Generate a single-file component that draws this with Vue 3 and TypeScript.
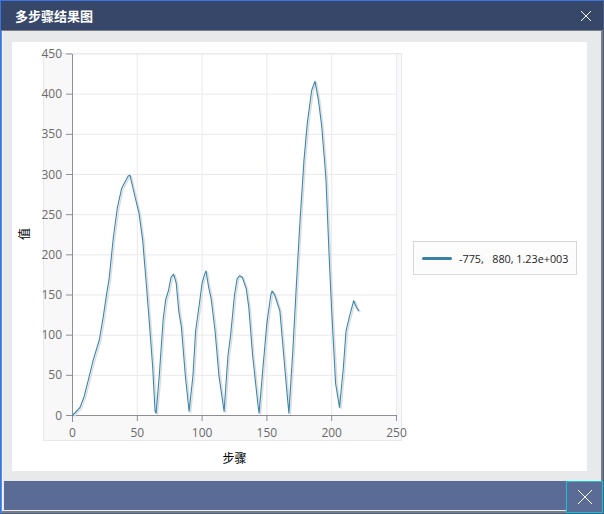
<template>
  <div class="window">
    <header class="titlebar">
      <span class="title">多步骤结果图</span>
      <svg class="close-icon" width="12" height="12" viewBox="0 0 12 12">
        <path d="M1 1L11 11M11 1L1 11" stroke="#fff" stroke-width="1" fill="none" />
      </svg>
    </header>

    <div class="lower">
      <main class="content">
        <div class="panel">
          <svg class="chart" width="392" height="429" viewBox="12 42 392 429">
            <rect x="43.5" y="53.5" width="358" height="387" class="chart-bg" />
            <rect x="72" y="54" width="325" height="362" fill="#fff" />

            <line v-for="t in xTicks" :key="'gx' + t" :x1="xPos(t)" :x2="xPos(t)" y1="54" y2="415.5" class="grid" />
            <line v-for="t in yTicks" :key="'gy' + t" x1="72" x2="397" :y1="yPos(t)" :y2="yPos(t)" class="grid" />

            <line x1="72.5" x2="72.5" y1="54" y2="422" class="axis" />
            <line x1="66" x2="397" y1="415.5" y2="415.5" class="axis" />
            <line v-for="t in xTicks" :key="'tx' + t" :x1="xPos(t)" :x2="xPos(t)" y1="415.5" y2="421" class="axis" />
            <line v-for="t in yTicks" :key="'ty' + t" x1="66" x2="72" :y1="yPos(t)" :y2="yPos(t)" class="axis" />

            <text v-for="t in yTicks" :key="'ly' + t" x="62" :y="yPos(t) + 4" text-anchor="end" class="tick">{{ t }}</text>
            <text v-for="t in xTicks" :key="'lx' + t" :x="xPos(t)" y="437" text-anchor="middle" class="tick">{{ t }}</text>

            <polyline :points="shadowPoints" class="series-shadow" />
            <polyline :points="seriesPoints" class="series" />

            <text x="234.5" y="463" text-anchor="middle" class="axis-title">步骤</text>
            <text x="0" y="0" text-anchor="middle" class="axis-title" transform="translate(29 234) rotate(-90)">值</text>
          </svg>

          <div class="legend">
            <span class="legend-line"></span>
            <span class="legend-label">-775,&nbsp;&nbsp; 880, 1.23e+003</span>
          </div>
        </div>
      </main>

      <footer class="footer">
        <div class="footer-main">
          <div class="footer-bar"></div>
        </div>
        <button class="footer-close" type="button">
          <svg width="16" height="16" viewBox="0 0 16 16">
            <path d="M1 1L15 15M15 1L1 15" stroke="#fff" stroke-width="1" fill="none" />
          </svg>
        </button>
      </footer>
    </div>
  </div>
</template>

<script setup lang="ts">
import { computed } from 'vue'

const xTicks = [0, 50, 100, 150, 200, 250]
const yTicks = [0, 50, 100, 150, 200, 250, 300, 350, 400, 450]

const data: [number, number][] = [
  [0, 0], [5.8, 10], [8.9, 23], [12.2, 44], [16, 69], [20.7, 94], [23.8, 123], [26.4, 152], [28.2, 169],
  [31.5, 221], [34.6, 258], [38, 283], [43, 298], [44.4, 299], [47.5, 277], [51.3, 252], [54.2, 218],
  [57.3, 156], [59.3, 115], [61.9, 60], [63.7, 5], [64.5, 3], [67, 50],
  [70, 120], [72, 145], [74, 155], [76, 172], [78, 176], [80, 165], [82, 130], [84, 110], [87, 50], [90, 5],
  [93, 50], [95, 105], [98, 140], [100, 165], [102, 176], [103, 180], [105, 160], [107, 145], [110, 105],
  [113, 50], [117, 5], [120, 75], [122, 100], [125, 150], [127, 170], [129, 174], [131, 172], [134, 158],
  [136, 135], [139, 75], [143, 15], [144, 3], [147, 60], [150, 115], [153, 150], [154, 155], [156, 150],
  [160, 130], [163, 75], [166, 20], [167, 3], [170, 80], [173, 170], [175.5, 240], [177.6, 293], [178.6, 318],
  [181.2, 364], [184.6, 405], [187.1, 416], [189.7, 393], [192.3, 360], [194.8, 310], [195.6, 293], [198, 200],
  [200, 130], [203, 40], [206, 10], [209, 60], [211, 105], [214, 125], [217, 143], [219, 135], [221, 130]
]

const xPos = (v: number) => 72.5 + v * 1.296
const yPos = (v: number) => 415.5 - v * 0.8033

const toPoints = (dx: number, dy: number) =>
  data.map(([x, y]) => `${(xPos(x) + dx).toFixed(1)},${(yPos(y) + dy).toFixed(1)}`).join(' ')

const seriesPoints = computed(() => toPoints(0, 0))
const shadowPoints = computed(() => toPoints(1.5, 1))
</script>

<style>
html,
body {
  margin: 0;
  background: #fff;
}
</style>

<style scoped>
.window {
  width: 604px;
  height: 514px;
  box-sizing: border-box;
  display: flex;
  flex-direction: column;
  background: #e8e9eb;
  border-top: 1px solid #3b74dc;
  border-left: 1px solid #3b74dc;
  border-right: 1px solid #4a5f85;
  border-bottom: 1px solid #4a5f85;
  font-family: "Open Sans", "Noto Sans CJK SC", sans-serif;
  overflow: hidden;
}

.titlebar {
  height: 29px;
  flex: none;
  display: flex;
  align-items: center;
  justify-content: space-between;
  padding: 0 11px 0 14px;
  background: #36476a;
  border-bottom: 1px solid #7a7f86;
}

.title {
  color: #fff;
  font-size: 13px;
  font-weight: 700;
  font-family: "Noto Sans CJK SC", sans-serif;
}

.close-icon {
  display: block;
}

.lower {
  flex: 1;
  min-height: 0;
  display: flex;
  flex-direction: column;
  border-left: 1px solid #5a90ea;
  box-shadow: inset 1px 0 0 #f1f4fa;
}

.content {
  flex: 1;
  min-height: 0;
  padding: 11px 14px 10px 10px;
  border-right: 2px solid #7a7d82;
}

.panel {
  height: 100%;
  background: #fff;
  display: flex;
  align-items: flex-start;
}

.chart {
  display: block;
  flex: none;
  overflow: visible;
}

.chart-bg {
  fill: #f8f8f8;
  stroke: #e8e8ec;
  stroke-width: 1;
}

.grid {
  stroke: #e9e9ee;
  stroke-width: 1;
}

.axis {
  stroke: #8d8d9b;
  stroke-width: 1;
}

.tick {
  font-size: 12px;
  fill: #6a6a6a;
}

.axis-title {
  font-size: 12px;
  fill: #000;
  font-family: "Noto Sans CJK SC", sans-serif;
}

.series {
  fill: none;
  stroke: #3a86ad;
  stroke-width: 1.1;
  stroke-linejoin: round;
}

.series-shadow {
  fill: none;
  stroke: #dcdcdc;
  stroke-width: 1.4;
  stroke-linejoin: round;
}

.legend {
  margin: 199px 0 0 9px;
  width: 164px;
  height: 34px;
  box-sizing: border-box;
  display: flex;
  align-items: center;
  gap: 7px;
  padding-left: 8px;
  background: #fcfcfc;
  border: 1px solid #d8d8d8;
}

.legend-line {
  width: 30px;
  height: 3px;
  background: #3a7fa6;
  border-radius: 2px;
}

.legend-label {
  font-size: 10.8px;
  color: #1c1c1c;
  white-space: nowrap;
}

.footer {
  flex: none;
  height: 32px;
  display: flex;
  align-items: stretch;
}

.footer-main {
  flex: 1;
  padding-left: 2px;
  border-bottom: 2px solid #7a7d82;
}

.footer-bar {
  height: 100%;
  box-sizing: border-box;
  background: #5a6b96;
  border-bottom: 1px solid #e8e9eb;
}

.footer-close {
  width: 37px;
  margin: 0;
  padding: 0;
  box-sizing: border-box;
  display: flex;
  align-items: center;
  justify-content: center;
  background: #5a6b96;
  border: 1px solid #12c4d4;
}
</style>
